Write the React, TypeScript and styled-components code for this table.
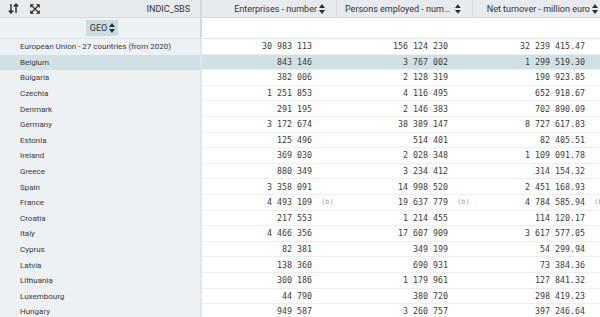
import React from "react";
import styled, { createGlobalStyle } from "styled-components";

const GlobalStyle = createGlobalStyle`
    html, body {
        margin: 0;
        padding: 0;
        background: #ffffff;
        overflow: hidden;
    }
    body {
        font-family: Roboto, "Liberation Sans", sans-serif;
    }
`;

const COLS = [135, 136, 137];
const LEFT_W = 202;

const Table = styled.div`
    width: 610px;
    display: flex;
    flex-direction: column;
    color: #3c3c3c;
`;

const HeadRow = styled.div`
    display: flex;
    height: 18px;
    background: #e8ebee;
    border-bottom: 1px solid #d6dadf;
    box-sizing: border-box;
`;

const Corner = styled.div`
    width: ${LEFT_W}px;
    flex: none;
    display: flex;
    align-items: center;
    padding: 0 10px 0 7px;
    box-sizing: border-box;
    border-right: 2px solid #d3d8dc;
    gap: 10px;
`;

const CornerLabel = styled.span`
    margin-left: auto;
    font-size: 9px;
    color: #333;
`;

const IconBtn = styled.span`
    display: inline-flex;
    align-items: center;
    justify-content: center;
    width: 12px;
    height: 12px;
    color: #3a3a3a;
`;

const HeadCell = styled.div<{ $w: number }>`
    width: ${(p) => p.$w}px;
    flex: none;
    display: flex;
    align-items: center;
    justify-content: flex-end;
    padding: 0 11px 0 8px;
    box-sizing: border-box;
    border-right: 1px solid #d6dadf;
    font-size: 9px;
    color: #333;
    min-width: 0;
    gap: 2px;
`;

const HeadText = styled.span`
    white-space: nowrap;
    overflow: hidden;
    text-overflow: ellipsis;
    min-width: 0;
`;

const SubRow = styled.div`
    display: flex;
    height: 21px;
    border-bottom: 1px solid #dfe3e6;
    box-sizing: border-box;
`;

const GeoCell = styled.div`
    width: ${LEFT_W}px;
    flex: none;
    background: #eef1f4;
    border-right: 2px solid #d3d8dc;
    box-sizing: border-box;
    display: flex;
    align-items: center;
    justify-content: center;
`;

const GeoTag = styled.span`
    display: inline-flex;
    align-items: center;
    gap: 2px;
    background: #c9dcdf;
    padding: 3px 3px 3px 4px;
    font-size: 9px;
    color: #333;
    margin-left: 4px;
`;

const Row = styled.div<{ $selected?: boolean }>`
    display: flex;
    height: 15.6px;
    background: ${(p) => (p.$selected ? "#d0e1e4" : "transparent")};
`;

const Label = styled.div<{ $selected?: boolean }>`
    width: ${LEFT_W}px;
    flex: none;
    background: ${(p) => (p.$selected ? "#d0e1e4" : "#eef1f4")};
    border-right: 2px solid #e2e6ea;
    box-sizing: border-box;
    padding-left: 20px;
    display: flex;
    align-items: center;
    font-size: 8px;
    color: #3a3a3a;
    white-space: nowrap;
`;

const Cell = styled.div<{ $w: number }>`
    width: ${(p) => p.$w}px;
    flex: none;
    display: flex;
    align-items: center;
    border-bottom: 1px solid #eceff1;
    box-sizing: border-box;
`;

const Value = styled.span`
    flex: 1;
    text-align: right;
    font-family: "DejaVu Sans Mono", "Liberation Mono", monospace;
    font-size: 8.3px;
    color: #3c3c3c;
    white-space: pre;
`;

const Flag = styled.span`
    width: 25px;
    flex: none;
    padding-left: 9px;
    box-sizing: border-box;
    font-family: "DejaVu Sans Mono", "Liberation Mono", monospace;
    font-size: 7px;
    color: #9a9a9a;
    white-space: nowrap;
`;

const SortIcon = () => (
    <svg width="6" height="10" viewBox="0 0 6 10">
        <path d="M3 0 L6 4 L0 4 Z M0 6 L6 6 L3 10 Z" fill="#2e2e2e" />
    </svg>
);

const OrderIcon = () => (
    <svg width="11" height="11" viewBox="0 0 11 11" fill="none" stroke="#333" strokeWidth="1.5">
        <path d="M3 1 V10 M0.8 7.5 L3 10 L5.2 7.5" />
        <path d="M8 10 V1 M5.8 3.5 L8 1 L10.2 3.5" />
    </svg>
);

const ExpandIcon = () => (
    <svg width="10" height="10" viewBox="0 0 10 10" fill="#333" stroke="#333" strokeWidth="1.3">
        <path d="M2 2 L8 8 M8 2 L2 8" />
        <path d="M0.5 0.5 H3.5 L0.5 3.5 Z M9.5 0.5 V3.5 L6.5 0.5 Z M0.5 9.5 V6.5 L3.5 9.5 Z M9.5 9.5 H6.5 L9.5 6.5 Z" strokeWidth="0.6" />
    </svg>
);

type Entry = { geo: string; v: [string, string, string]; flag?: boolean };

const DATA: Entry[] = [
    { geo: "European Union - 27 countries (from 2020)", v: ["30 983 113", "156 124 230", "32 239 415.47"] },
    { geo: "Belgium", v: ["843 146", "3 767 002", "1 299 519.30"] },
    { geo: "Bulgaria", v: ["382 006", "2 128 319", "190 923.85"] },
    { geo: "Czechia", v: ["1 251 853", "4 116 495", "652 918.67"] },
    { geo: "Denmark", v: ["291 195", "2 146 383", "702 890.09"] },
    { geo: "Germany", v: ["3 172 674", "38 389 147", "8 727 617.83"] },
    { geo: "Estonia", v: ["125 496", "514 401", "82 405.51"] },
    { geo: "Ireland", v: ["369 030", "2 028 348", "1 109 091.78"] },
    { geo: "Greece", v: ["880 349", "3 234 412", "314 154.32"] },
    { geo: "Spain", v: ["3 358 091", "14 998 520", "2 451 168.93"] },
    { geo: "France", v: ["4 493 109", "19 637 779", "4 784 585.94"], flag: true },
    { geo: "Croatia", v: ["217 553", "1 214 455", "114 120.17"] },
    { geo: "Italy", v: ["4 466 356", "17 607 909", "3 617 577.05"] },
    { geo: "Cyprus", v: ["82 381", "349 199", "54 299.94"] },
    { geo: "Latvia", v: ["138 360", "690 931", "73 384.36"] },
    { geo: "Lithuania", v: ["300 186", "1 179 961", "127 841.32"] },
    { geo: "Luxembourg", v: ["44 790", "380 720", "298 419.23"] },
    { geo: "Hungary", v: ["949 587", "3 260 757", "397 246.64"] },
];

const HEADERS = ["Enterprises - number", "Persons employed - number", "Net turnover - million euro"];

export default function App() {
    return (
        <>
            <GlobalStyle />
            <Table>
                <HeadRow>
                    <Corner>
                        <IconBtn><OrderIcon /></IconBtn>
                        <IconBtn><ExpandIcon /></IconBtn>
                        <CornerLabel>INDIC_SBS</CornerLabel>
                    </Corner>
                    {HEADERS.map((h, i) => (
                        <HeadCell key={h} $w={COLS[i]}>
                            <HeadText>{h}</HeadText>
                            <SortIcon />
                        </HeadCell>
                    ))}
                </HeadRow>
                <SubRow>
                    <GeoCell>
                        <GeoTag>
                            GEO <SortIcon />
                        </GeoTag>
                    </GeoCell>
                </SubRow>
                {DATA.map((d) => {
                    const selected = d.geo === "Belgium";
                    return (
                        <Row key={d.geo} $selected={selected}>
                            <Label $selected={selected}>{d.geo}</Label>
                            {d.v.map((val, i) => (
                                <Cell key={i} $w={COLS[i]}>
                                    <Value>{val}</Value>
                                    <Flag>{d.flag ? "(b)" : ""}</Flag>
                                </Cell>
                            ))}
                        </Row>
                    );
                })}
            </Table>
        </>
    );
}
